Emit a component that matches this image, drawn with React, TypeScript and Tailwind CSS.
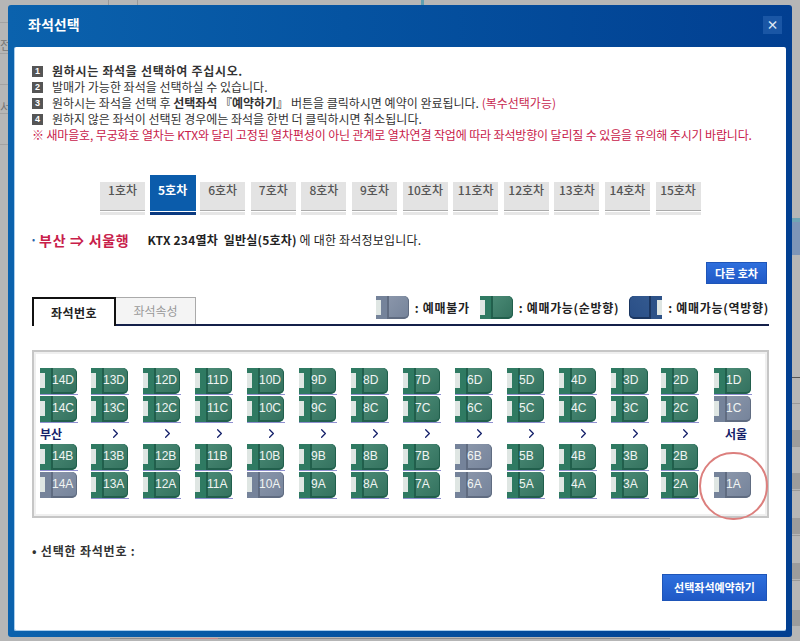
import { ChevronRight } from "lucide-react";
import type { ReactNode } from "react";

const FONT = "font-['Noto_Sans_CJK_KR','Liberation_Sans',sans-serif]";

const CARS = ["1", "5", "6", "7", "8", "9", "10", "11", "12", "13", "14", "15"];
const COLS = ["14", "13", "12", "11", "10", "9", "8", "7", "6", "5", "4", "3", "2", "1"];
const SOLD = new Set(["14A", "10A", "6A", "6B", "1A", "1C"]);
const SEAT_GRID = "grid grid-cols-[51px_repeat(10,52px)_50px_53px_38px]";

// 뒤쪽 페이지 표 줄
const LEFT_LINES = ["top-[22px]", "top-[53px]", "top-[84px]", "top-[113px]", "top-[144px]"];
const RIGHT_LINES = ["top-[403px]", "top-[446px]", "top-[490px]", "top-[535px]", "top-[580px]", "top-[625px]"];
const RIGHT_BOXES = ["top-[430px]", "top-[473px]", "top-[518px]", "top-[563px]", "top-[610px]"];

type Tone = "green" | "gray" | "blue";

const TONE: Record<Tone, { back: string; front: string; line: string }> = {
  green: { back: "bg-[#2f7a62]", front: "bg-gradient-to-br from-[#4a8a75] to-[#34725f]", line: "border-[#215f4c]" },
  gray: { back: "bg-[#75839a]", front: "bg-gradient-to-br from-[#8a96aa] to-[#76849b]", line: "border-[#606c81]" },
  blue: { back: "bg-[#2d5288]", front: "bg-gradient-to-br from-[#33598f] to-[#2a4f87]", line: "border-[#1b3660]" },
};

function SeatShape({ tone, label, small }: { tone: Tone; label?: string; small?: boolean }) {
  const t = TONE[tone];
  return (
    <div className={`relative flex overflow-hidden rounded-r-[5px] ${small ? "h-[23px] w-[33px]" : "h-[26px] w-[37px]"} ${t.back}`}>
      <div className={`w-[13px] shrink-0 border-r-2 ${t.line}`} />
      <div className={`flex-1 rounded-r-[5px] border-b-2 border-r ${t.front} ${t.line}`} />
      <div className={`absolute left-0 w-[5px] bg-[#dfe6e3] ${small ? "top-[4px] h-[15px]" : "top-[5px] h-[15px]"}`} />
      {label && (
        <span className="absolute left-[12px] top-0 flex h-[24px] items-center font-['Liberation_Sans',sans-serif] text-[12px] text-[#f1f5f3]">
          {label}
        </span>
      )}
    </div>
  );
}

function Seat({ id }: { id: string }) {
  if (id === "1B") return <div className="h-[27px]" />;
  return (
    <div className={`h-[27px] w-[38px] ${SOLD.has(id) ? "" : "border-b border-[#8f8fd0]"}`}>
      <SeatShape tone={SOLD.has(id) ? "gray" : "green"} label={id} />
    </div>
  );
}

function SeatRow({ row }: { row: string }) {
  return (
    <div className={SEAT_GRID}>
      {COLS.map((c) => (
        <Seat key={c + row} id={c + row} />
      ))}
    </div>
  );
}

function Legend({ tone, text, flip }: { tone: Tone; text: string; flip?: boolean }) {
  return (
    <div className="flex items-center gap-[6px]">
      <div className={flip ? "-scale-x-100" : ""}>
        <SeatShape tone={tone} small />
      </div>
      <span className="text-[12px] font-bold tracking-[0.7px] text-[#222]">{text}</span>
    </div>
  );
}

function Note({ n, children }: { n: string; children: ReactNode }) {
  return (
    <p className="flex items-center">
      <span className="mr-[9px] flex h-[11px] w-[11px] items-center justify-center bg-[#555] font-['Liberation_Sans',sans-serif] text-[9px] font-bold text-white">
        {n}
      </span>
      <span>{children}</span>
    </p>
  );
}

function CarTab({ car }: { car: string }) {
  if (car === "5") {
    return (
      <div className="-mx-[1px] flex h-[40px] w-[46px] flex-col">
        <div className="flex-1 bg-[#0b5cab] pt-[8px] text-center text-[12px] font-bold leading-[14px] text-white">{car}호차</div>
        <div className="mt-[1px] h-[3px] bg-[#0b3a80]" />
      </div>
    );
  }
  return (
    <div className="flex h-[33px] w-[45px] flex-col">
      <div className="flex-1 border-b border-[#aaa] bg-[#e3e3e3] pt-[1px] text-center text-[12px] font-medium leading-[14px] text-[#555]">
        {car}호차
      </div>
      <div className="mt-[1px] h-[3px] bg-[#e6e6e6]" />
    </div>
  );
}

export default function App() {
  return (
    <div className={`relative h-[641px] w-[800px] overflow-hidden bg-[#b6b6b6] ${FONT}`}>
      {/* 뒤쪽 페이지 */}
      <div className="absolute left-[108px] top-0 h-[5px] w-px bg-[#999]" />
      <div className="absolute left-[137px] top-0 h-[5px] w-px bg-[#999]" />
      <div className="absolute left-[421px] top-0 h-[5px] w-[3px] bg-[#5f9fb0]" />
      {LEFT_LINES.map((y) => (
        <div key={y} className={`absolute left-0 h-px w-[8px] bg-[#a2a2a2] ${y}`} />
      ))}
      <span className="absolute left-0 top-[38px] text-[12px] leading-[14px] text-[#777]">전</span>
      <span className="absolute left-0 top-[100px] text-[12px] leading-[14px] text-[#777]">서</span>
      <div className="absolute right-0 top-[218px] h-[4px] w-[8px] bg-[#6fa5b5]" />
      <div className="absolute right-0 top-[222px] h-[33px] w-[8px] bg-[#7d95b8]" />
      <div className="absolute right-0 top-[377px] h-px w-[8px] bg-[#555]" />
      {RIGHT_LINES.map((y) => (
        <div key={y} className={`absolute right-0 h-px w-[8px] bg-[#999] ${y}`} />
      ))}
      {RIGHT_BOXES.map((y) => (
        <div key={y} className={`absolute right-0 h-[16px] w-[8px] bg-[#9c9c9c] ${y}`} />
      ))}
      <div className="absolute bottom-[2px] left-[110px] h-px w-[560px] bg-[#8d8d8d]" />
      <div className="absolute bottom-[2px] left-[170px] h-px w-[48px] bg-[#c98a8a]" />

      {/* 모달 */}
      <div className="absolute left-[8px] top-[5px] h-[632px] w-[784px] rounded-[3px] bg-gradient-to-r from-[#0b62ad] to-[#023f91] px-[6px] pb-[6px]">
        <div className="flex h-[42px] items-center justify-between pb-[3px] pl-[14px] pr-[4px]">
          <h1 className="text-[14px] font-bold text-white">좌석선택</h1>
          <button className="flex h-[18px] w-[19px] items-center justify-center bg-[#1a56a5] text-[12px] font-bold leading-none text-[#dfe8f5]">
            ×
          </button>
        </div>

        <div className="h-[584px] rounded-[2px] border-b border-l border-[#a9cdec] bg-white">
          <div className="flex flex-col gap-[2px] pl-[17px] pt-[17px] text-[12px] leading-[14px] text-[#333]">
            <Note n="1"><b className="tracking-[0.7px]">원하시는 좌석을 선택하여 주십시오.</b></Note>
            <Note n="2">발매가 가능한 좌석을 선택하실 수 있습니다.</Note>
            <Note n="3">
              원하시는 좌석을 선택 후 <b>선택좌석 『예약하기』</b> 버튼을 클릭하시면 예약이 완료됩니다.{" "}
              <span className="text-[#c8284f]">(복수선택가능)</span>
            </Note>
            <Note n="4">원하지 않은 좌석이 선택된 경우에는 좌석을 한번 더 클릭하시면 취소됩니다.</Note>
            <p className="whitespace-nowrap tracking-[-0.14px] text-[#c8204a]">
              ※ 새마을호, 무궁화호 열차는 KTX와 달리 고정된 열차편성이 아닌 관계로 열차연결 작업에 따라 좌석방향이 달리질 수 있음을 유의해 주시기 바랍니다.
            </p>
          </div>

          {/* 호차 */}
          <div className="mt-[33px] flex items-end gap-[5.6px] pl-[85px]">
            {CARS.map((c) => (
              <CarTab key={c} car={c} />
            ))}
          </div>

          <div className="mt-[15px] flex h-[20px] items-center whitespace-nowrap pl-[17px]">
            <span className="mr-[4px] text-[9px] text-[#2a62a8]">•</span>
            <span className="text-[14px] font-bold tracking-[0.7px] text-[#c8204a]">부산 ⇒ 서울행</span>
            <span className="ml-[18px] text-[12px] tracking-[0.2px] text-[#222]">
              <b>KTX 234열차 &nbsp;일반실(5호차)</b> 에 대한 좌석정보입니다.
            </span>
          </div>

          <div className="mt-[12px] flex justify-end pr-[19px]">
            <button className="flex h-[22px] w-[61px] items-center justify-center border border-[#1e55b8] bg-gradient-to-b from-[#2e6fdd] to-[#2059c6] text-[11px] font-bold text-white">
              다른 호차
            </button>
          </div>

          {/* 탭 */}
          <div className="ml-[17px] mr-[17px] mt-[13px] flex h-[29px] justify-between border-b-2 border-[#14204a]">
            <div className="flex items-start">
              <div className="-mb-[2px] flex h-[29px] w-[84px] items-center justify-center border-x-2 border-t-2 border-[#111] bg-white text-[12px] font-bold tracking-[0.4px] text-[#222]">
                좌석번호
              </div>
              <div className="flex h-[27px] w-[80px] items-center justify-center border-r border-t border-[#aaa] bg-[#f4f4f4] text-[12px] text-[#999]">
                좌석속성
              </div>
            </div>
            <div className="-mt-[1px] flex h-[23px] items-center gap-[10px]">
              <Legend tone="gray" text=": 예매불가" />
              <Legend tone="green" text=": 예매가능(순방향)" />
              <Legend tone="blue" text=": 예매가능(역방향)" flip />
            </div>
          </div>

          {/* 좌석표 */}
          <div className="relative ml-[17px] mr-[17px] mt-[24px] h-[168px] border-2 border-[#c6c6c6] bg-white pl-[6px] pt-[16px] shadow-[inset_0_0_0_2px_#efefef]">
            <div className="flex flex-col gap-[1px]">
              <SeatRow row="D" />
              <SeatRow row="C" />
            </div>
            <div className={`${SEAT_GRID} h-[21px] items-center`}>
              {COLS.map((c, i) =>
                i === 0 || i === 13 ? (
                  <span key={c} className={`whitespace-nowrap text-[12px] font-bold text-[#14206a] ${i === 13 ? "pl-[11px]" : ""}`}>
                    {i === 0 ? "부산" : "서울"}
                  </span>
                ) : (
                  <span key={c} className="pl-[17px] text-[#14206a]">
                    <ChevronRight size={15} strokeWidth={2} />
                  </span>
                ),
              )}
            </div>
            <div className="flex flex-col gap-[1px]">
              <SeatRow row="B" />
              <SeatRow row="A" />
            </div>
            <div className="absolute left-[665px] top-[100px] h-[68px] w-[69px] rounded-full border-2 border-[#dc7f7d]" />
          </div>

          <p className="mt-[23px] h-[20px] pl-[17px] text-[12px] font-bold leading-[20px] tracking-[0.8px] text-[#333]">
            • 선택한 좌석번호 :
          </p>

          <div className="mt-[13px] flex justify-end pr-[19px]">
            <button className="flex h-[27px] w-[105px] items-center justify-center border border-[#1e55b8] bg-gradient-to-b from-[#2e6fdd] to-[#2059c6] text-[11px] font-bold text-white">
              선택좌석예약하기
            </button>
          </div>
        </div>
      </div>
    </div>
  );
}
